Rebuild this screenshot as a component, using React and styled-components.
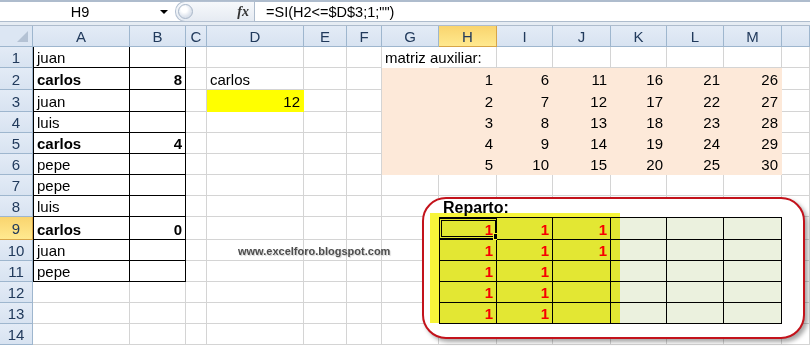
import React from 'react';
import styled, { createGlobalStyle } from 'styled-components';

const GlobalStyle = createGlobalStyle`
  html, body {
    margin: 0;
    padding: 0;
    background: #fff;
  }
  body {
    font-family: Arial, "Liberation Sans", sans-serif;
    overflow: hidden;
  }
`;

const LETTERS = ['A', 'B', 'C', 'D', 'E', 'F', 'G', 'H', 'I', 'J', 'K', 'L', 'M', 'N'];
const COL_WIDTHS = [97, 56, 21, 97, 43, 35, 57, 58, 56, 58, 56, 57, 58, 28];
const ROW_HEIGHTS = [21, 22, 22, 21, 21, 21, 21, 21, 23, 21, 21, 21, 21, 21];
const GRID = '#d4d4d4';
const HEAD_LINE = '#9eb6ce';

const Window = styled.div`
  width: 810px;
  height: 346px;
  overflow: hidden;
  background: #fff;
`;

/* formula bar */
const FormulaBar = styled.div`
  display: flex;
  height: 22px;
  box-sizing: border-box;
  border-top: 2px solid #aebccd;
  border-bottom: 1px solid #aebccd;
  font-size: 14.5px;
  color: #000;
`;

const NameBox = styled.div`
  width: 175px;
  display: flex;
  align-items: center;
`;

const NameText = styled.span`
  width: 160px;
  text-align: center;
`;

const DropArrow = styled.span`
  width: 0;
  height: 0;
  border-left: 4px solid transparent;
  border-right: 4px solid transparent;
  border-top: 4px solid #000;
`;

const FxPill = styled.div`
  width: 80px;
  display: flex;
  align-items: center;
  justify-content: space-between;
  box-sizing: border-box;
  padding: 0 5px 0 2px;
  border: 1px solid #b3c0d1;
  border-right-color: #aebccd;
  border-radius: 10px 0 0 10px;
  background: linear-gradient(#f6f8fb, #e6ebf2);
  margin-top: -1px;
  margin-bottom: -1px;
`;

const Knob = styled.span`
  width: 13px;
  height: 13px;
  border-radius: 50%;
  border: 1px solid #a8b6c8;
  background: radial-gradient(circle at 40% 35%, #ffffff 0 25%, #dfe5ee 60%, #c9d3e0);
`;

const FxLabel = styled.span`
  font-family: "Liberation Serif", "DejaVu Serif", serif;
  font-style: italic;
  font-weight: 700;
  font-size: 14px;
  color: #333;
`;

const FormulaText = styled.div`
  flex: 1;
  display: flex;
  align-items: center;
  padding-left: 11px;
  white-space: nowrap;
`;

const Band = styled.div`
  height: 3px;
  background: #e6ecf3;
  border-bottom: 1px solid #aebccd;
`;

/* sheet */
const Sheet = styled.div`
  position: relative;
  display: grid;
  grid-template-columns: 33px ${COL_WIDTHS.map((w) => `${w}px`).join(' ')};
  grid-template-rows: 21px ${ROW_HEIGHTS.map((h) => `${h}px`).join(' ')};
  font-size: 15px;
`;

const Corner = styled.div`
  display: flex;
  justify-content: flex-end;
  align-items: flex-end;
  padding: 0 4px 4px 0;
  box-sizing: border-box;
  background: #dce6f3;
  border-right: 1px solid ${HEAD_LINE};
  border-bottom: 1px solid ${HEAD_LINE};

  &::after {
    content: '';
    width: 0;
    height: 0;
    border-left: 11px solid transparent;
    border-bottom: 11px solid #b4c2d4;
  }
`;

const Header = styled.div`
  display: flex;
  align-items: center;
  justify-content: center;
  box-sizing: border-box;
  padding-top: 1px;
  color: #213a5c;
  background: ${(p) =>
    p.$active ? 'linear-gradient(#f9d46e, #ffe98f)' : 'linear-gradient(#e3ebf6, #d8e3f1)'};
  border-right: 1px solid ${(p) => (p.$active ? '#d7a548' : HEAD_LINE)};
  border-bottom: 1px solid ${(p) => (p.$active ? '#d7a548' : HEAD_LINE)};
`;

const Cell = styled.div`
  display: flex;
  align-items: flex-end;
  justify-content: ${(p) => (p.$right ? 'flex-end' : 'flex-start')};
  box-sizing: border-box;
  padding: 0 3px 1px 3px;
  line-height: 17px;
  white-space: nowrap;
  background: ${(p) => p.$fill || 'transparent'};
  border-right: 1px solid ${(p) => p.$line};
  border-bottom: 1px solid ${(p) => p.$line};
  border-left: ${(p) => (p.$edgeLeft ? '1px solid #000' : '0')};
  border-top: ${(p) => (p.$edgeTop ? '1px solid #000' : '0')};
  font-weight: ${(p) => (p.$bold ? 700 : 400)};
  color: ${(p) => p.$color || '#000'};
  z-index: ${(p) => (p.$raised ? 2 : 'auto')};
  position: ${(p) => (p.$selected ? 'relative' : 'static')};
`;

const Selection = styled.div`
  position: absolute;
  left: -1px;
  top: 0;
  right: -2px;
  bottom: 0;
  border: 3px double #000;
  pointer-events: none;
`;

const FillHandle = styled.div`
  position: absolute;
  right: -5px;
  bottom: -4px;
  width: 5px;
  height: 5px;
  background: #000;
  border: 1px solid #fff;
`;

/* drawing objects lying over the sheet */
const Frame = styled.div`
  position: absolute;
  left: 422px;
  top: 171px;
  width: 383px;
  height: 142px;
  box-sizing: border-box;
  border: 2px solid #c3121b;
  border-radius: 24px;
  background: #fff;
  box-shadow: 3px 3px 4px rgba(0, 0, 0, 0.35);
  z-index: 1;
`;

const FrameTitle = styled.div`
  padding-left: 19px;
  font-size: 16px;
  font-weight: 700;
  line-height: 18px;
  color: #000;
`;

const Highlight = styled.div`
  position: absolute;
  left: 430px;
  top: 187px;
  width: 190px;
  height: 110px;
  background: #f7f53a;
  mix-blend-mode: multiply;
  z-index: 3;
  pointer-events: none;
`;

const Watermark = styled.div`
  position: absolute;
  left: 238px;
  top: 219px;
  font-size: 11px;
  font-weight: 700;
  color: #4d4d4d;
  text-shadow: 1px 1px 1px rgba(0, 0, 0, 0.18);
  z-index: 4;
`;

const NAMES = ['juan', 'carlos', 'juan', 'luis', 'carlos', 'pepe', 'pepe', 'luis', 'carlos', 'juan', 'pepe'];
const COUNTS = { 2: 8, 5: 4, 9: 0 };
const LIMIT = 12;

// matriz auxiliar H2:M6
const aux = (row, col) => (col - 7) * 5 + (row - 1);

function describe(row, col) {
  const cell = { line: GRID };

  // A1:B11 list with black borders
  if (row <= 11 && col <= 1) {
    cell.line = '#000';
    cell.edgeLeft = col === 0;
    if (col === 0) {
      cell.value = NAMES[row - 1];
      cell.bold = NAMES[row - 1] === 'carlos';
    } else if (COUNTS[row] !== undefined) {
      cell.value = COUNTS[row];
      cell.bold = true;
      cell.right = true;
    }
  }

  if (col === 3 && row === 2) cell.value = 'carlos';
  if (col === 3 && row === 3) {
    cell.value = LIMIT;
    cell.right = true;
    cell.fill = '#ffff00';
    cell.line = '#ffff00';
  }

  if (col === 6 && row === 1) {
    cell.value = 'matriz auxiliar:';
    cell.line = 'transparent';
  }

  if (row >= 2 && row <= 6 && col >= 6 && col <= 12) {
    cell.fill = '#fde9d9';
    cell.line = '#fde9d9';
    if (col >= 7) {
      cell.value = aux(row, col);
      cell.right = true;
    }
  }

  // Reparto H9:M13
  if (row >= 9 && row <= 13 && col >= 7 && col <= 12) {
    cell.fill = '#ebf1de';
    cell.line = '#000';
    cell.edgeLeft = col === 7;
    cell.edgeTop = row === 9;
    cell.raised = true;
    if (aux(row - 7, col) <= LIMIT) {
      cell.value = 1;
      cell.right = true;
      cell.bold = true;
      cell.color = '#ff0000';
    }
    cell.selected = row === 9 && col === 7;
  }

  return cell;
}

export default function App() {
  return (
    <Window>
      <GlobalStyle />
      <FormulaBar>
        <NameBox>
          <NameText>H9</NameText>
          <DropArrow />
        </NameBox>
        <FxPill>
          <Knob />
          <FxLabel>fx</FxLabel>
        </FxPill>
        <FormulaText>=SI(H2&lt;=$D$3;1;"")</FormulaText>
      </FormulaBar>
      <Band />
      <Sheet>
        <Corner />
        {LETTERS.map((l) => (
          <Header key={l} $active={l === 'H'}>
            {l === 'N' ? null : l}
          </Header>
        ))}
        {ROW_HEIGHTS.map((_, i) => {
          const row = i + 1;
          return (
            <React.Fragment key={row}>
              <Header $active={row === 9}>{row}</Header>
              {LETTERS.map((l, col) => {
                const c = describe(row, col);
                return (
                  <Cell
                    key={l + row}
                    $line={c.line}
                    $fill={c.fill}
                    $right={c.right}
                    $bold={c.bold}
                    $color={c.color}
                    $edgeLeft={c.edgeLeft}
                    $edgeTop={c.edgeTop}
                    $raised={c.raised}
                    $selected={c.selected}
                  >
                    {c.value}
                    {c.selected && (
                      <Selection>
                        <FillHandle />
                      </Selection>
                    )}
                  </Cell>
                );
              })}
            </React.Fragment>
          );
        })}
        <Frame>
          <FrameTitle>Reparto:</FrameTitle>
        </Frame>
        <Highlight />
        <Watermark>www.excelforo.blogspot.com</Watermark>
      </Sheet>
    </Window>
  );
}
